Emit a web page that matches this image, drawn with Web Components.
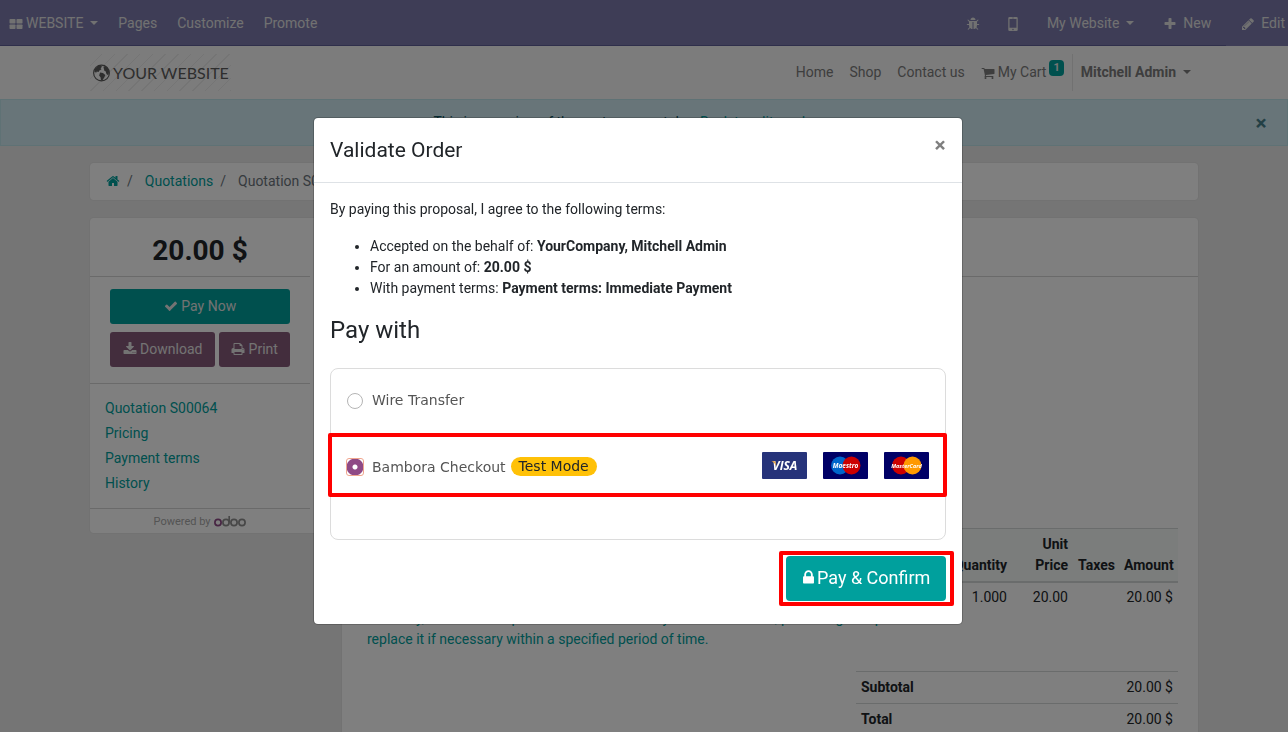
<!DOCTYPE html>
<html lang="en">
<head>
<meta charset="utf-8">
<title>Quotation S00064 | My Website</title>
<meta name="viewport" content="width=device-width, initial-scale=1">
<style>
html, body { height: 100%; }
body { margin: 0; overflow: hidden; background: #eaeaea; color: #212529; font: 14px/21px Roboto, "Noto Sans", sans-serif; }
</style>
</head>
<body>
<portal-page></portal-page>
<pay-dialog heading="Validate Order"></pay-dialog>

<script>
const RESET = `
*, *::before, *::after { box-sizing: border-box; }
a { color: inherit; text-decoration: none; }
button { font: inherit; color: inherit; cursor: pointer; margin: 0; }
`;
function define(name, html, init) {
  const t = document.createElement('template');
  t.innerHTML = html.replace('<style>', '<style>' + RESET);
  customElements.define(name, class extends HTMLElement {
    constructor() {
      super();
      this.attachShadow({ mode: 'open' }).append(t.content.cloneNode(true));
    }
    connectedCallback() { if (init) init(this, this.shadowRoot); }
  });
}

const ICONS = {
  tiles: '<rect x="64" y="256" width="768" height="576" rx="96"/><rect x="960" y="256" width="768" height="576" rx="96"/><rect x="64" y="960" width="768" height="576" rx="96"/><rect x="960" y="960" width="768" height="576" rx="96"/>',
  bug: '<path d="M1696 960q0 26-19 45t-45 19h-224q0 171-67 290l208 209q19 19 19 45t-19 45q-18 19-45 19t-45-19l-198-197q-5 5-15 13t-42 28.5-65 36.5-82 29-97 13v-896h-128v896q-51 0-101.5-13.5t-87-33-66-39-43.5-32.5l-15-14-183 207q-20 21-48 21-24 0-43-16-19-18-20.5-44.5t15.5-46.5l202-227q-58-114-58-274h-224q-26 0-45-19t-19-45 19-45 45-19h224v-294l-173-173q-19-19-19-45t19-45 45-19 45 19l173 173h844l173-173q19-19 45-19t45 19 19 45-19 45l-173 173v294h224q26 0 45 19t19 45zm-480-576h-640q0-133 93.5-226.5t226.5-93.5 226.5 93.5 93.5 226.5z"/>',
  mobile: '<path fill-rule="evenodd" d="M450 0h892q160 0 160 160v1472q0 160-160 160H450q-160 0-160-160V160Q290 0 450 0zM450 260v1120h892V260zM760 100v60h272v-60zM896 1490a90 90 0 1 0 1 0z"/>',
  plus: '<path d="M1600 736v192q0 40-28 68t-68 28h-416v416q0 40-28 68t-68 28h-192q-40 0-68-28t-28-68v-416h-416q-40 0-68-28t-28-68v-192q0-40 28-68t68-28h416v-416q0-40 28-68t68-28h192q40 0 68 28t28 68v416h416q40 0 68 28t28 68z"/>',
  pencil: '<path d="M491 1536l91-91-235-235-91 91v107h128v128h107zm523-928q0-22-22-22-10 0-17 7l-542 542q-7 7-7 17 0 22 22 22 10 0 17-7l542-542q7-7 7-17zm-54-192l416 416-832 832h-416v-416zm683 96q0 53-37 90l-166 166-416-416 166-165q36-38 90-38 53 0 91 38l235 234q37 39 37 91z"/>',
  check: '<path d="M1671 566q0 40-28 68l-724 724-136 136q-28 28-68 28t-68-28l-136-136-362-362q-28-28-28-68t28-68l136-136q28-28 68-28t68 28l294 295 656-657q28-28 68-28t68 28l136 136q28 28 28 68z"/>',
  download: '<path d="M1344 1344q0-26-19-45t-45-19-45 19-19 45 19 45 45 19 45-19 19-45zm256 0q0-26-19-45t-45-19-45 19-19 45 19 45 45 19 45-19 19-45zm128-224v320q0 40-28 68t-68 28h-1472q-40 0-68-28t-28-68v-320q0-40 28-68t68-28h465l135 136q58 56 136 56t136-56l136-136h464q40 0 68 28t28 68zm-325-569q17 41-14 70l-448 448q-18 19-45 19t-45-19l-448-448q-31-29-14-70 17-39 59-39h256v-448q0-26 19-45t45-19h256q26 0 45 19t19 45v448h256q42 0 59 39z"/>',
  print: '<path d="M448 1536h896v-256h-896v256zm0-640h896v-384h-160q-40 0-68-28t-28-68v-160h-640v640zm1152 64q0-26-19-45t-45-19-45 19-19 45 19 45 45 19 45-19 19-45zm128 0v416q0 13-9.500 22.500t-22.500 9.500h-224v160q0 40-28 68t-68 28h-960q-40 0-68-28t-28-68v-160h-224q-13 0-22.500-9.500t-9.500-22.500v-416q0-79 56.500-135.500t135.500-56.500h64v-544q0-40 28-68t68-28h672q40 0 88 20t76 48l152 152q28 28 48 76t20 88v256h64q79 0 135.500 56.500t56.500 135.500z"/>',
  lock: '<path d="M640 768h512v-192q0-106-75-181t-181-75-181 75-75 181v192zm832 96v576q0 40-28 68t-68 28h-960q-40 0-68-28t-28-68v-576q0-40 28-68t68-28h32v-192q0-184 132-316t316-132 316 132 132 316v192h32q40 0 68 28t28 68z"/>',
  home: '<path d="M1472 992v480q0 26-19 45t-45 19h-384v-384h-256v384h-384q-26 0-45-19t-19-45v-480q0-1 .5-3t.5-3l575-474 575 474q1 2 1 6zm223-69l-62 74q-8 9-21 11h-3q-13 0-21-7l-692-577-692 577q-12 8-24 7-13-2-21-11l-62-74q-8-10-7-23.500t11-21.500l719-599q32-26 76-26t76 26l244 204v-195q0-14 9-23t23-9h192q14 0 23 9t9 23v408l219 182q10 8 11 21.500t-7 23.500z"/>',
  cart: '<path d="M704 1536q0 52-38 90t-90 38-90-38-38-90 38-90 90-38 90 38 38 90zm896 0q0 52-38 90t-90 38-90-38-38-90 38-90 90-38 90 38 38 90zm128-1088v512q0 24-16.500 42.500t-40.500 21.500l-1044 122q13 60 13 70 0 16-24 64h920q26 0 45 19t19 45-19 45-45 19h-1024q-26 0-45-19t-19-45q0-11 8-31.500t16-36 21.500-40 15.500-29.500l-177-823h-204q-26 0-45-19t-19-45 19-45 45-19h256q16 0 28.500 6.500t19.500 15.500 13 24.500 8 26 5.500 29.500 4.500 26h1201q26 0 45 19t19 45z"/>',
  arrow: '<path d="M1472 960v-128q0-26-19-45t-45-19h-502l189-189q19-19 19-45t-19-45l-91-91q-18-18-45-18t-45 18l-362 362-91 91q-18 18-18 45t18 45l91 91 362 362q18 18 45 18t45-18l91-91q18-18 18-45t-18-45l-189-189h502q26 0 45-19t19-45z" transform="rotate(90 896 896)"/>'
};
define('ui-icon', `<style>
:host { display: inline-block; width: 14px; height: 14px; vertical-align: -2px; }
svg { display: block; width: 100%; height: 100%; fill: currentColor; }
</style><svg viewBox="0 0 1792 1792" aria-hidden="true"></svg>`,
  (el, root) => { root.querySelector('svg').innerHTML = ICONS[el.getAttribute('name')]; });

define('editor-bar', `<style>
:host { display: flex; height: 46px; background: #7c7bad; color: #e2e2e2; justify-content: space-between; overflow: hidden; }
nav { display: flex; flex: none; }
nav.menu { flex: 1; border-bottom: 1px solid #5f5e97; }
a, button { display: flex; align-items: center; padding: 2px 10px 0; border: 0; border-bottom: 1px solid #5f5e97; background: none; white-space: nowrap; gap: 3px; height: 46px; }
.menu > * { border-bottom-color: transparent; }
.menu > button { padding-left: 9px; }
.caret { width: 0; border: 4px solid transparent; border-top-color: currentColor; border-bottom: 0; margin: 0 0 2px 4px; }
.wide { padding: 2px 15px 0; gap: 6px; }
.site { padding: 2px 14px 0; gap: 3px; }
.icon { padding: 2px 13px 0; }
.edit { border-bottom-color: transparent; padding-right: 3px; }
</style>
<nav class="menu" aria-label="Editor">
  <button type="button"><ui-icon name="tiles"></ui-icon>WEBSITE<span class="caret"></span></button>
  <a href="#pages">Pages</a><a href="#customize">Customize</a><a href="#promote">Promote</a>
</nav>
<nav aria-label="Tools">
  <button type="button" class="icon" aria-label="Debug"><ui-icon name="bug"></ui-icon></button>
  <button type="button" class="icon" aria-label="Mobile preview"><ui-icon name="mobile"></ui-icon></button>
  <button type="button" class="site">My Website<span class="caret"></span></button>
  <button type="button" class="wide"><ui-icon name="plus"></ui-icon>New</button>
  <button type="button" class="wide edit"><ui-icon name="pencil"></ui-icon>Edit</button>
</nav>`);

define('site-header', `<style>
:host { display: block; background: #f8f8f8; }
.wrap { max-width: 1140px; margin: 0 auto; padding: 8px 16px; display: flex; justify-content: space-between; height: 53px; color: #7c7c7c; }
.logo { display: flex; align-items: center; gap: 2px; padding: 0 2px; height: 37px; font: 400 16px/20px Lato, sans-serif; color: #5c5c5c;
  background: repeating-linear-gradient(135deg, transparent 0 8px, #eaeaea 8px 9px); }
.logo svg { width: 19px; height: 20px; }
nav { display: flex; align-items: center; }
nav a, nav button { padding: 0 8px; white-space: nowrap; background: none; border: 0; display: flex; align-items: center; }
.cart ui-icon { margin-right: 3px; }
.badge { align-self: flex-start; background: #00a09d; color: #e8e8e8; font-size: 11px; line-height: 16px; font-weight: 700; padding: 0 4px; border-radius: 4px; margin: -2px 0 0 3px; }
nav .user { border-left: 1px solid #e2e2e2; height: 37px; font-weight: 700; padding-right: 7px; }
.caret { width: 0; border: 4px solid transparent; border-top-color: currentColor; border-bottom: 0; margin: 0 0 2px 7px; }
</style>
<div class="wrap">
  <a class="logo" href="#home">
    <svg viewBox="0 0 20 20" aria-hidden="true"><circle cx="10" cy="10" r="8.300" fill="none" stroke="currentColor" stroke-width="1.200"/><path fill="currentColor" d="M3 5.500 6.500 2.500l3-.5 1 1.500-1.500 1.500 1 1-2.500 1.500-.5 1.500-2-.5-.5 1-1.500-.2L2.500 8zM8.500 9.500l3 .5 2.500 2-1 2.500-2 3-1.500.5-.5-3.500-1.500-2zM12 3.500l2-1 2.500 2 1.500 3.500-.5 3.500-1 .5-1.500-1.500-.5-2-1.500-1-.5-2z"/></svg>
    <span>YOUR WEBSITE</span></a>
  <nav aria-label="Site">
    <a href="#home">Home</a><a href="#shop">Shop</a><a href="#contact">Contact us</a>
    <a class="cart" href="#cart"><ui-icon name="cart"></ui-icon>My Cart<span class="badge">1</span></a>
    <button type="button" class="user">Mitchell Admin<span class="caret"></span></button>
  </nav>
</div>`);

define('preview-alert', `<style>
:host { display: flex; align-items: center; padding: 12px 20px; border: 1px solid #bee5eb; background: #d0eaf2; color: #0c5460; }
p { margin: 0; flex: 1; text-align: center; padding-left: 6px; }
a { color: #00a09d; }
button { border: 0; background: none; padding: 1px 0 0; width: 12px; height: 21px; margin-left: 36px; font-size: 21px; line-height: 20px; font-weight: 700; opacity: .7; }
</style>
<p>This is a preview of the customer portal. <a href="#edit"><ui-icon name="arrow"></ui-icon>Back to edit mode</a></p>
<button type="button" aria-label="Close preview notice">×</button>`);

define('crumb-trail', `<style>
:host { display: block; background: #fff; border-radius: 4px; box-shadow: 0 0 0 1px #e4e4e4; }
ol { display: flex; list-style: none; margin: 0; padding: 8px 16px; }
li { color: #6c757d; }
li + li::before { content: "/"; padding: 0 12px 0 7px; }
a { color: #00a09d; }
</style>
<ol><li><a href="#home" aria-label="Home"><ui-icon name="home"></ui-icon></a></li><li><a href="#quotations">Quotations</a></li><li>Quotation S00064</li></ol>`);

define('quote-sidebar', `<style>
:host { display: block; background: #fff; border-radius: 4px; box-shadow: 0 0 0 1px #e4e4e4; width: 236px; }
section { width: 220px; border-bottom: 1px solid #d4d4d4; }
h2 { margin: 0; padding: 16px 0 8px; font-size: 28px; line-height: 34px; text-align: center; }
.actions { display: grid; grid-template-columns: 105px 1fr; gap: 8px 4px; padding: 12px 20px 16px; }
button { height: 35px; border: 0; border-radius: 3px; background: #875a7b; padding: 0; color: #e6e6e6; }
.pay { grid-column: 1 / -1; background: #00a09d; }
ul { list-style: none; margin: 0; padding: 12px 15px; line-height: 25px; color: #00a09d; }
footer { display: flex; justify-content: center; align-items: center; gap: 4px; width: 220px; height: 24px; color: #a8a8a8; font-size: 11px; }
svg { width: 32px; height: 12px; }
</style>
<section><h2>20.00 $</h2></section>
<section class="actions">
  <button type="button" class="pay"><ui-icon name="check"></ui-icon> Pay Now</button>
  <button type="button"><ui-icon name="download"></ui-icon> Download</button>
  <button type="button"><ui-icon name="print"></ui-icon> Print</button>
</section>
<section><ul>
  <li><a href="#quotation">Quotation S00064</a></li><li><a href="#pricing">Pricing</a></li>
  <li><a href="#terms">Payment terms</a></li><li><a href="#history">History</a></li>
</ul></section>
<footer>Powered by <svg viewBox="0 0 32 12" role="img" aria-label="odoo" fill="none" stroke="#8f8f8f" stroke-width="1.700"><circle cx="4" cy="7.500" r="3.100" stroke="#8f4a86"/><circle cx="12" cy="7.500" r="3.100"/><path d="M15.200 1v6.500"/><circle cx="20" cy="7.500" r="3.100"/><circle cx="28" cy="7.500" r="3.100"/></svg></footer>`);

define('quote-card', `<style>
:host { display: block; background: #fff; border-radius: 4px 4px 0 0; box-shadow: 0 0 0 1px #e4e4e4; }
header { height: 59px; border-bottom: 1px solid #d4d4d4; }
.body { padding: 251px 20px 20px; }
table { width: 100%; border-collapse: separate; border-spacing: 0; }
th, td { padding: 5px; text-align: right; vertical-align: top; }
.lines { table-layout: fixed; }
.lines th { background: #f6faf9; border-top: 1px solid #d4d8d8; border-bottom: 2px solid #d4d8d8; vertical-align: bottom; }
.lines td { padding-top: 4px; }
th:first-child, .lines td:first-child { text-align: left; }
.lines p { margin: 0; max-width: 560px; color: #00a09d; }
.q { width: 82px; } .p { width: 61px; } .t { width: 46px; } .a { width: 59px; }
.totals { width: 322px; margin: 16px 0 0 auto; }
.totals th, .totals td { border-top: 1px solid #d4d8d8; }
</style>
<header></header>
<div class="body">
  <table class="lines">
    <thead><tr><th scope="col">Products</th><th scope="col" class="q">Quantity</th><th scope="col" class="p">Unit Price</th><th scope="col" class="t">Taxes</th><th scope="col" class="a">Amount</th></tr></thead>
    <tbody><tr><td>Warranty<p>Warranty, issued to the purchaser of an article by its manufacturer, promising to repair or replace it if necessary within a specified period of time.</p></td><td>1.000</td><td>20.00</td><td></td><td>20.00 $</td></tr></tbody>
  </table>
  <table class="totals">
    <tbody><tr><th scope="row">Subtotal</th><td>20.00 $</td></tr><tr><th scope="row">Total</th><td>20.00 $</td></tr></tbody>
  </table>
</div>`);

define('portal-page', `<style>
:host { display: block; height: 100vh; overflow: hidden; }
main { max-width: 1140px; margin: 0 auto; padding: 17px 16px 0; }
.columns { display: flex; align-items: flex-start; gap: 16px; margin-top: 18px; }
quote-card { flex: 1; min-width: 0; }
</style>
<editor-bar></editor-bar><site-header></site-header><preview-alert></preview-alert>
<main><crumb-trail></crumb-trail><div class="columns"><quote-sidebar></quote-sidebar><quote-card></quote-card></div></main>`);

define('card-brands', `<style>
:host { display: flex; gap: 16px; }
svg { width: 45px; height: 27px; display: block; border-radius: 1px; }
text { font-family: "Open Sans", sans-serif; font-style: italic; font-weight: 700; fill: #fff; text-anchor: middle; }
</style>
<svg viewBox="0 0 45 27" role="img" aria-label="Visa"><path fill="#26337a" d="M0 0h45v27H0z"/><text x="23" y="18" font-size="12" font-weight="800">VISA</text><path fill="#e7a13d" d="M9.500 9.200h3.700l1.300 5q-1.200-3.500-5-5z"/></svg>
<svg viewBox="0 0 45 27" role="img" aria-label="Maestro"><path fill="#000066" d="M0 0h45v27H0z"/><circle cx="17" cy="13.500" r="9" fill="#0066cb"/><circle cx="28.500" cy="13.500" r="9" fill="#cc0000"/><text x="22.500" y="16" font-size="6.500">Maestro</text></svg>
<svg viewBox="0 0 45 27" role="img" aria-label="MasterCard"><path fill="#000066" d="M0 0h45v27H0z"/><circle cx="17" cy="13.500" r="9" fill="#cc0000"/><circle cx="28.500" cy="13.500" r="9" fill="#ff9900"/><text x="22.500" y="15.500" font-size="5.500">MasterCard</text></svg>`);

define('pay-dialog', `<style>
:host { position: fixed; inset: 0; overflow: hidden; background: rgba(0,0,0,.5); padding: 117px 12px 0 0; }
.box { max-width: 650px; margin: 0 auto; background: #fff; background-clip: padding-box; border: 1px solid rgba(0,0,0,.2); border-radius: 5px; }
header { display: flex; justify-content: space-between; align-items: flex-start; padding: 16px; height: 65px; border-bottom: 1px solid #dee2e6; }
h4 { margin: 0; font-size: 21px; line-height: 32px; font-weight: 400; }
.close { border: 0; background: none; padding: 0; width: 12px; font-size: 21px; line-height: 22px; font-weight: 700; color: #7f7f7f; }
.body { padding: 16px 16px 18px; }
p { margin: 0 0 16px; }
ul { margin: 0 0 16px; padding-left: 40px; }
h3 { margin: 0 0 23px; font-size: 24px; line-height: 30px; font-weight: 400; }
fieldset { margin: 0; padding: 0 0 42px; min-width: 0; border: 1px solid #dcdcdc; border-radius: 8px; font-family: "DejaVu Sans", sans-serif; color: #555; }
.row { display: flex; align-items: center; justify-content: space-between; height: 64px; padding: 0 16px; }
.row.marked { margin: 0 -2px 0 -3px; padding: 0 14px 0 15px; border: 4px solid #f00; border-radius: 2px; }
label { display: flex; align-items: center; gap: 9px; }
.marked label { padding-top: 4px; }
.name { padding-bottom: 2px; }
.marked .name { padding-bottom: 0; }
input { appearance: none; width: 16px; height: 16px; margin: 0; border: 1px solid #b5b5b5; border-radius: 50%; background: #fff; }
input:checked { border: 0; background: radial-gradient(circle, #fff 2px, #8f4a86 3px 8px, #fff 9px); outline: 1px solid #f0a58e; outline-offset: 0; border-radius: 2px; }
.badge { margin: 0 0 2px -4px; padding: 0 8px; line-height: 19px; border-radius: 10px; background: #ffc107; color: #212529; }
.end { display: flex; justify-content: flex-end; margin: 11px -8px 0 0; }
.mark { border: 4px solid #f00; border-radius: 2px; padding: 1px 4px 1px 3px; }
.pay { display: block; width: 160px; height: 45px; border: 0; border-radius: 4px; background: #00a09d; color: #fff; font-size: 18px; padding: 0 2px 2px 0; }
.pay ui-icon { width: 17px; height: 17px; margin-right: -4px; }
</style>
<div class="box" role="dialog" aria-modal="true" aria-labelledby="t">
  <header><h4 id="t"></h4><button type="button" class="close" aria-label="Close">×</button></header>
  <div class="body">
    <p>By paying this proposal, I agree to the following terms:</p>
    <ul>
      <li>Accepted on the behalf of: <b>YourCompany, Mitchell Admin</b></li>
      <li>For an amount of: <b>20.00 $</b></li>
      <li>With payment terms: <b>Payment terms: Immediate Payment</b></li>
    </ul>
    <h3 id="m">Pay with</h3>
    <fieldset aria-labelledby="m">
      <div class="row"><label><input type="radio" name="method" value="wire"><span class="name">Wire Transfer</span></label></div>
      <div class="row marked"><label><input type="radio" name="method" value="bambora" checked><span class="name">Bambora Checkout</span><span class="badge">Test Mode</span></label><card-brands></card-brands></div>
    </fieldset>
    <div class="end"><div class="mark"><button type="submit" class="pay"><ui-icon name="lock"></ui-icon> Pay &amp; Confirm</button></div></div>
  </div>
</div>`, (el, root) => { root.getElementById('t').textContent = el.getAttribute('heading'); });
</script>
</body>
</html>
